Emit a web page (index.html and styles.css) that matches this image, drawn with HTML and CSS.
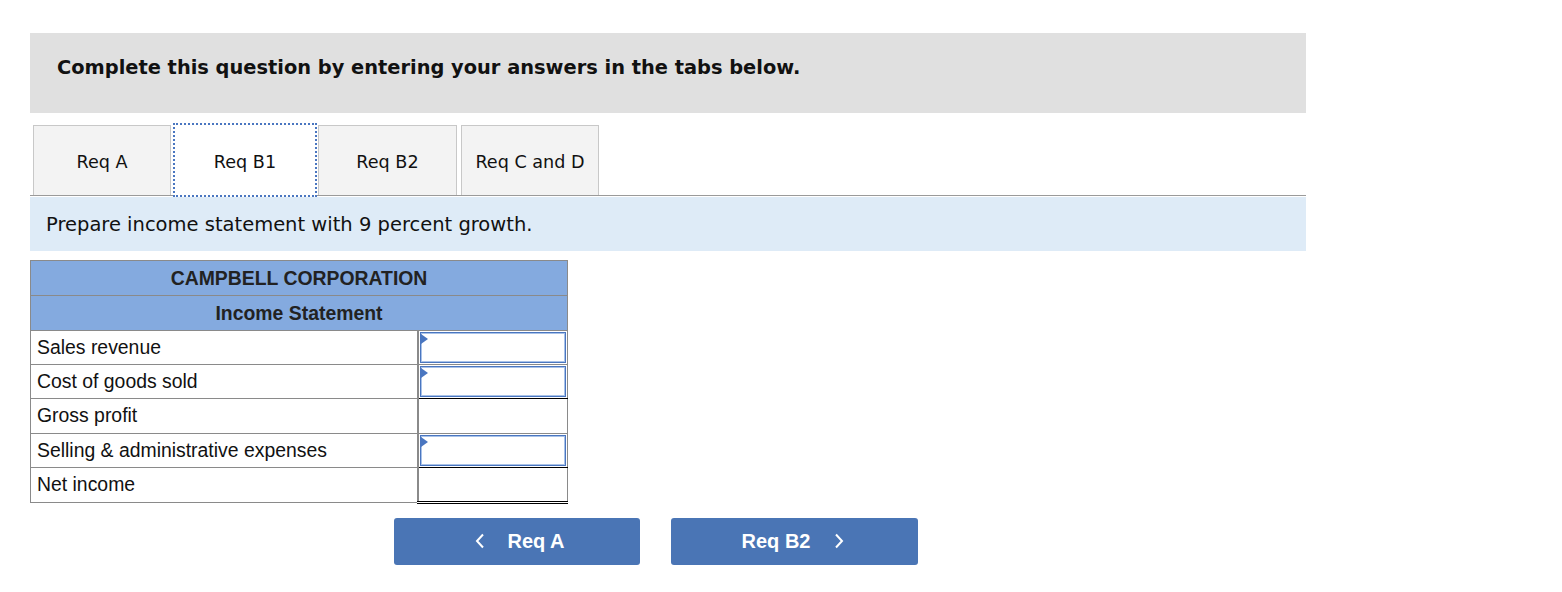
FILE: index.html
```html
<!DOCTYPE html>
<html>
<head>
<meta charset="utf-8">
<link rel="stylesheet" href="styles.css">
</head>
<body>
<div class="page">
  <div class="header">Complete this question by entering your answers in the tabs below.</div>
  <div class="tabs">
    <div class="tab t1">Req A</div>
    <div class="tab active">Req B1</div>
    <div class="tab t3">Req B2</div>
    <div class="tab t4">Req C and D</div>
  </div>
  <div class="instr">Prepare income statement with 9 percent growth.</div>
  <table class="stmt">
    <tr class="hrow"><th colspan="2">CAMPBELL CORPORATION</th></tr>
    <tr class="hrow"><th colspan="2">Income Statement</th></tr>
    <tr><td class="lbl">Sales revenue</td><td class="val"><div class="inp"><span class="tri"></span></div></td></tr>
    <tr><td class="lbl">Cost of goods sold</td><td class="val blk"><div class="inp"><span class="tri"></span></div></td></tr>
    <tr><td class="lbl">Gross profit</td><td class="val"></td></tr>
    <tr><td class="lbl">Selling &amp; administrative expenses</td><td class="val blk"><div class="inp"><span class="tri"></span></div></td></tr>
    <tr><td class="lbl">Net income</td><td class="val dbl"></td></tr>
  </table>
  <div class="nav">
    <div class="btn prev"><svg class="chev" width="10" height="16" viewBox="0 0 10 16"><polyline points="8,1.5 2,8 8,14.5" fill="none" stroke="#fff" stroke-width="2"/></svg><span>Req A</span></div>
    <div class="btn next"><span>Req B2</span><svg class="chev" width="10" height="16" viewBox="0 0 10 16"><polyline points="2,1.5 8,8 2,14.5" fill="none" stroke="#fff" stroke-width="2"/></svg></div>
  </div>
</div>
</body>
</html>
```

FILE: styles.css
```css
html, body { margin: 0; padding: 0; background: #fff; }
.page { padding: 33px 0 0 30px; width: 1276px; }
.header {
  height: 80px;
  box-sizing: border-box;
  background: #e0e0e0;
  padding: 22px 27px 0;
  font-family: "DejaVu Sans", Verdana, sans-serif;
  font-weight: bold;
  font-size: 19.4px;
  line-height: 25px;
  color: #111;
}
.tabs {
  margin-top: 12px;
  height: 70px;
  display: flex;
  align-items: flex-start;
  padding-left: 3px;
  border-bottom: 1px solid #9a9a9a;
}
.tab {
  box-sizing: border-box;
  height: 70px;
  width: 138px;
  background: #f3f3f3;
  border: 1px solid #c8c8c8;
  border-bottom: none;
  display: flex;
  align-items: center;
  justify-content: center;
  font-family: "DejaVu Sans", Verdana, sans-serif;
  font-size: 17.6px;
  color: #111;
  padding-top: 2px;
}
.tab.active {
  width: 144px;
  height: 74px;
  margin: -2px 0 0 2px;
  background: #fff;
  border: 2px dotted #4a76c0;
  position: relative;
  z-index: 1;
  padding-top: 3px;
}
.tab.t3 { margin-left: 1px; width: 139px; }
.tab.t4 { margin-left: 4px; }
.instr {
  margin-top: 1px;
  height: 54px;
  box-sizing: border-box;
  background: #deebf7;
  padding-left: 16px;
  display: flex;
  align-items: center;
  font-family: "DejaVu Sans", Verdana, sans-serif;
  font-size: 19.5px;
  color: #111;
}
.stmt {
  margin-top: 9px;
  border-collapse: collapse;
  width: 538px;
  font-family: "Liberation Sans", Arial, sans-serif;
  font-size: 19.4px;
  color: #111;
}
.stmt th {
  background: #84aadf;
  height: 34px;
  padding: 0;
  border: 1px solid #8a8a8a;
  font-weight: bold;
  text-align: center;
  color: #222;
}
.stmt td {
  height: 33.2px;
  padding: 0;
  border: 1px solid #8a8a8a;
  border-left: none;
  border-right: none;
}
.stmt td.lbl {
  width: 383px;
  padding-left: 6px;
  border-left: 1px solid #8a8a8a;
}
.stmt td.val {
  width: 147px;
  height: 32.2px;
  border-left: 2px solid #8a8a8a;
  border-right: 1px solid #8a8a8a;
  vertical-align: top;
  padding: 1px 1px 0 1px;
}
.stmt td.val.blk { border-bottom: 1px solid #000; }
.stmt td.val.dbl { border-bottom: 3px double #000; }
.inp {
  position: relative;
  box-sizing: border-box;
  height: 31.2px;
  border: 1px solid #4a76c0;
  box-shadow: inset 0 0 0 1px #a9c2e8;
  background: #fff;
}
.tri {
  position: absolute;
  left: 0;
  top: 1px;
  width: 0;
  height: 0;
  border-top: 5px solid transparent;
  border-bottom: 5px solid transparent;
  border-left: 7px solid #4a76c0;
}
.nav {
  margin-top: 14px;
  display: flex;
  gap: 31px;
  padding-left: 364px;
}
.btn {
  box-sizing: border-box;
  width: 246px;
  height: 47px;
  background: #4a75b5;
  border-radius: 3px;
  display: flex;
  align-items: center;
  justify-content: center;
  gap: 22px;
  color: #fff;
  font-family: "Liberation Sans", Arial, sans-serif;
  font-weight: bold;
  font-size: 20px;
}
.btn.prev { padding-left: 6px; }
.btn.next { width: 247px; gap: 24px; padding-right: 3px; }
.chev { display: block; }
```
